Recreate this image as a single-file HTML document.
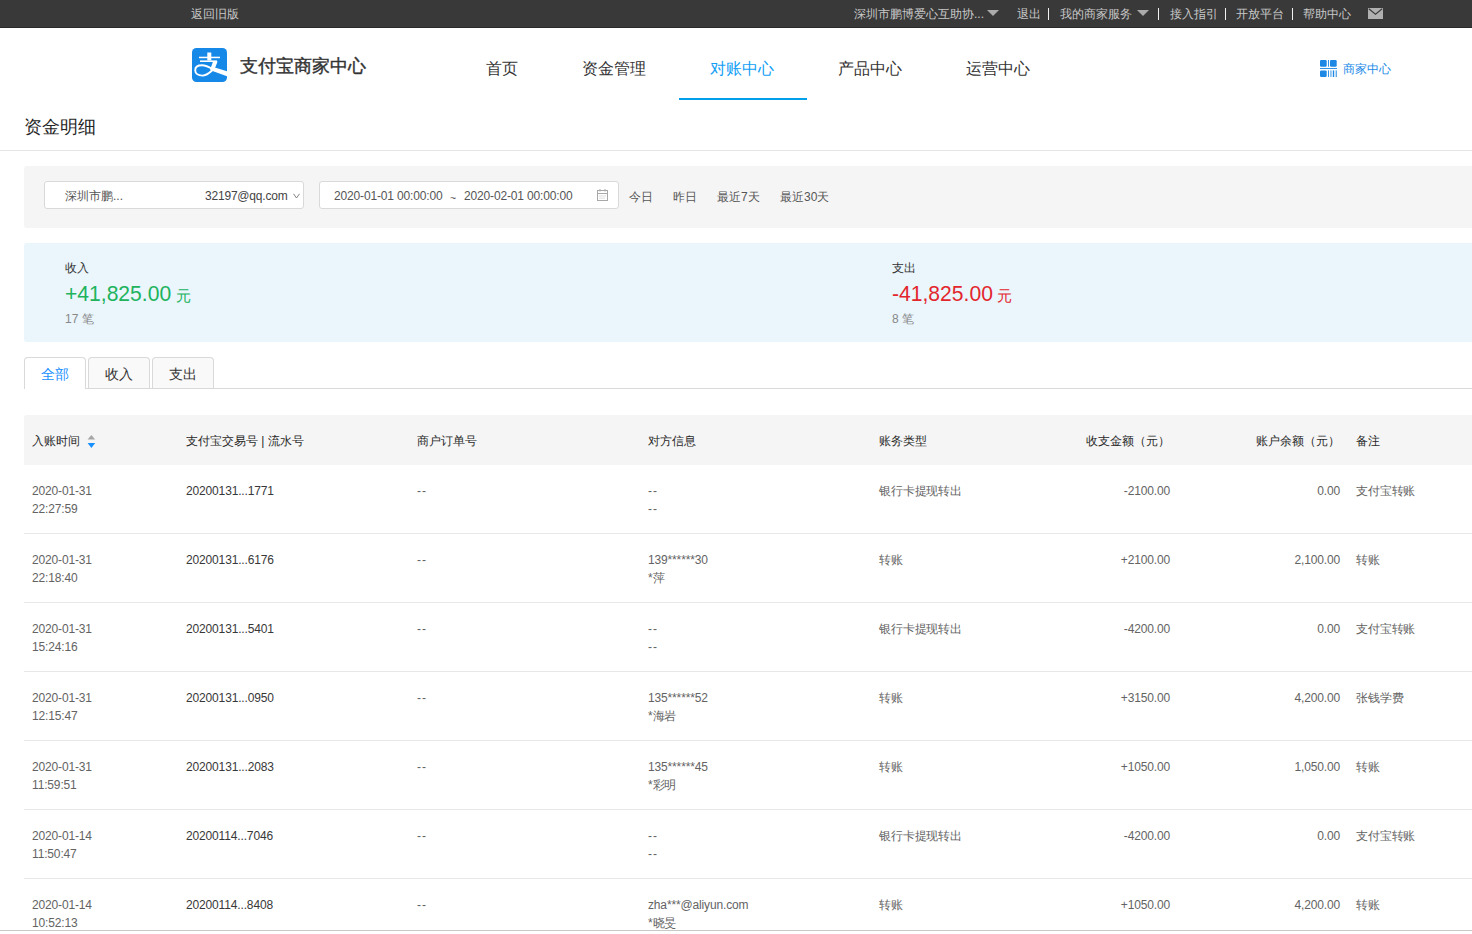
<!DOCTYPE html>
<html><head><meta charset="utf-8">
<style>
*{margin:0;padding:0;box-sizing:border-box}
html,body{width:1472px;height:934px;overflow:hidden;background:#fff;font-family:"Liberation Sans",sans-serif;color:#333}
.a{position:absolute;white-space:nowrap}
#top{position:absolute;left:0;top:0;width:1472px;height:28px;background:#393939;border-bottom:1px solid #2a2a2a}
#top .t{position:absolute;top:6px;font-size:12px;line-height:16px;color:#c8c8c8}
.sep{position:absolute;top:8px;width:1px;height:12px;background:#f0f0f0}
.tri{position:absolute;top:10px;width:0;height:0;border-left:6px solid transparent;border-right:6px solid transparent;border-top:6.5px solid #ababab}
.nav{position:absolute;top:58px;font-size:16px;line-height:22px;color:#333}
#logo{position:absolute;left:192px;top:48px;width:35px;height:34px}
.hr{position:absolute;left:0;width:1472px;height:1px;background:#e5e5e5}
#filter{position:absolute;left:24px;top:166px;width:1460px;height:62px;background:#f5f5f5;border-radius:3px}
.box{position:absolute;top:181px;height:28px;background:#fff;border:1px solid #d9d9d9;border-radius:3px}
.ft{position:absolute;top:188px;font-size:12px;line-height:16px;color:#555}
.q{position:absolute;top:189px;font-size:12px;line-height:16px;color:#555}
#sum{position:absolute;left:24px;top:243px;width:1460px;height:99px;background:#eaf5fc;border-radius:3px}
.sl{position:absolute;top:260px;font-size:12px;line-height:16px;color:#333}
.sv{position:absolute;top:281px;font-size:22.5px;line-height:26px;transform:scaleX(0.9375);transform-origin:0 0;white-space:nowrap}
.yu{position:absolute;top:287px;font-size:14.5px;line-height:18px;white-space:nowrap}
.sc{position:absolute;top:311px;font-size:12px;line-height:16px;color:#888}
.tab{position:absolute;top:357px;height:32px;border:1px solid #d9d9d9;border-bottom:none;border-radius:4px 4px 0 0;background:#f9f9f9;font-size:14px;line-height:33px;text-align:center;color:#333}
#thead{position:absolute;left:24px;top:415px;width:1460px;height:50px;background:#f5f5f5;border-radius:3px 3px 0 0}
.th{position:absolute;top:433px;font-size:12px;line-height:16px;color:#2a2a2a}
.td{position:absolute;font-size:12px;line-height:18px;color:#636363;white-space:nowrap;letter-spacing:-0.15px}
.dd{letter-spacing:0.9px}
.c1{left:32px}.c2{left:186px;color:#383838}.c3{left:417px}.c4{left:648px}.c5{left:879px}
.c6{right:302px}.c7{right:132px}.c8{left:1356px}
.row{position:absolute;left:24px;width:1448px;height:1px;background:#e8e8e8}

</style></head><body>
<div id="top">
  <div class="t" style="left:191px">返回旧版</div>
  <div class="t" style="left:854px">深圳市鹏博爱心互助协...</div>
  <div class="tri" style="left:987px"></div>
  <div class="t" style="left:1017px">退出</div>
  <div class="sep" style="left:1048px"></div>
  <div class="t" style="left:1060px">我的商家服务</div>
  <div class="tri" style="left:1137px"></div>
  <div class="sep" style="left:1158px"></div>
  <div class="t" style="left:1170px">接入指引</div>
  <div class="sep" style="left:1225px"></div>
  <div class="t" style="left:1236px">开放平台</div>
  <div class="sep" style="left:1292px"></div>
  <div class="t" style="left:1303px">帮助中心</div>
  <svg class="a" style="left:1368px;top:8px" width="15" height="11" viewBox="0 0 15 11"><rect x="0" y="0" width="15" height="11" fill="#b0b0b0"/><path d="M0.8 0.8 L7.5 6.2 L14.2 0.8" stroke="#3a3a3a" stroke-width="1.1" fill="none"/></svg>
</div>
<svg id="logo" viewBox="0 0 35 34">
  <defs><clipPath id="lc"><rect x="0" y="0" width="35" height="34" rx="4.5"/></clipPath></defs>
  <g clip-path="url(#lc)">
  <rect x="0" y="0" width="35" height="34" fill="#1688e8"/>
  <rect x="7" y="8.7" width="21" height="1.5" fill="#fff"/>
  <rect x="15.3" y="4.5" width="4" height="8" fill="#fff"/>
  <rect x="8" y="12.4" width="17" height="1.6" fill="#fff"/>
  <path d="M21 13.6 L25.6 13.6 L22.4 21.5 L18.2 21.8 Z" fill="#fff"/>
  <path d="M19.5 18.6 L36 23.5 L36 28.7 L18.4 22.3 Z" fill="#fff"/>
  <path d="M20.3 21.2 C17 19 14 17.3 10 17.3 C5.5 17.3 3.2 19.4 3.2 22.3 C3.2 25.3 6 27.6 10.3 27.6 C14.5 27.6 17.5 25 20.3 22.3" stroke="#fff" stroke-width="1.9" fill="none"/>
  </g>
</svg>
<div class="a" style="left:240px;top:55px;font-size:17.5px;line-height:22px;color:#333;font-weight:500;-webkit-text-stroke:0.4px #333">支付宝商家中心</div>
<div class="nav" style="left:486px">首页</div>
<div class="nav" style="left:582px">资金管理</div>
<div class="nav" style="left:710px;color:#12a0f5">对账中心</div>
<div class="nav" style="left:838px">产品中心</div>
<div class="nav" style="left:966px">运营中心</div>
<div class="a" style="left:679px;top:98px;width:128px;height:2px;background:#00a0ea"></div>
<svg class="a" style="left:1320px;top:60px" width="17" height="17" viewBox="0 0 17 17" fill="#1e88e5">
  <rect x="0" y="0" width="6.7" height="6.7" rx="1.2"/><rect x="8.1" y="0" width="0.9" height="6.7"/><rect x="10" y="0" width="6.7" height="6.7" rx="1.2"/>
  <rect x="0" y="8.1" width="17" height="0.9"/>
  <rect x="0" y="10.4" width="6.7" height="6.6" rx="1.2"/><rect x="8.1" y="10.4" width="0.9" height="6.6"/><rect x="10.5" y="10.4" width="0.9" height="6.6"/><rect x="12.8" y="10.4" width="1.4" height="6.6"/><rect x="15.7" y="10.4" width="1" height="6.6"/>
</svg>
<div class="a" style="left:1343px;top:61px;font-size:12px;line-height:17px;color:#1a8ae8">商家中心</div>

<div class="a" style="left:24px;top:116px;font-size:18px;line-height:22px;color:#262626">资金明细</div>
<div class="hr" style="top:150px"></div>

<div id="filter"></div>
<div class="box" style="left:44px;width:260px"></div>
<div class="ft" style="left:65px">深圳市鹏...</div>
<div class="ft" style="left:205px;color:#444;letter-spacing:-0.2px">32197@qq.com</div>
<svg class="a" style="left:292.5px;top:193px" width="7" height="6" viewBox="0 0 7 6"><path d="M0.5 0.8 L3.5 5 L6.5 0.8" stroke="#777" stroke-width="0.9" fill="none"/></svg>
<div class="box" style="left:319px;width:300px"></div>
<div class="ft" style="left:334px;letter-spacing:-0.15px">2020-01-01 00:00:00</div>
<div class="ft" style="left:450px;top:190px;font-size:10.5px">~</div>
<div class="ft" style="left:464px;letter-spacing:-0.15px">2020-02-01 00:00:00</div>
<svg class="a" style="left:597px;top:189px" width="11" height="12" viewBox="0 0 11 12"><rect x="0.5" y="1.5" width="10" height="10" fill="none" stroke="#a8a8a8" stroke-width="1"/><rect x="0.5" y="4" width="10" height="1" fill="#a8a8a8"/><rect x="2.5" y="0" width="1" height="2.5" fill="#a8a8a8"/><rect x="7.5" y="0" width="1" height="2.5" fill="#a8a8a8"/><path d="M2.5 7H3.5M4.5 7H5.5M6.5 7H7.5M8.5 7H9 M2.5 9.2H3.5M4.5 9.2H5.5M6.5 9.2H7.5" stroke="#b8b8b8" stroke-width="0.9"/></svg>
<div class="q" style="left:629px">今日</div>
<div class="q" style="left:673px">昨日</div>
<div class="q" style="left:717px">最近7天</div>
<div class="q" style="left:780px">最近30天</div>

<div id="sum"></div>
<div class="sl" style="left:65px">收入</div>
<div class="sv" style="left:65px;color:#20b35c">+41,825.00</div><div class="yu" style="left:176px;color:#20b35c">元</div>
<div class="sc" style="left:65px">17 笔</div>
<div class="sl" style="left:892px">支出</div>
<div class="sv" style="left:892px;color:#e3262c">-41,825.00</div><div class="yu" style="left:997px;color:#e3262c">元</div>
<div class="sc" style="left:892px">8 笔</div>

<div class="tab" style="left:24px;width:62px;background:#fff;color:#1890ff;height:32px">全部</div>
<div class="tab" style="left:88px;width:62px">收入</div>
<div class="tab" style="left:152px;width:62px">支出</div>
<div class="a" style="left:86px;top:388px;width:1386px;height:1px;background:#d9d9d9"></div>

<div id="thead"></div>
<div class="th" style="left:32px">入账时间</div>
<svg class="a" style="left:87px;top:434px" width="9" height="15" viewBox="0 0 9 15"><path d="M0.6 5.4 L4.4 1 L8.2 5.4 Z" fill="#a6a6a6"/><path d="M0.6 9 L4.4 14 L8.2 9 Z" fill="#1890ff"/></svg>
<div class="th" style="left:186px">支付宝交易号 | 流水号</div>
<div class="th" style="left:417px">商户订单号</div>
<div class="th" style="left:648px">对方信息</div>
<div class="th" style="left:879px">账务类型</div>
<div class="th" style="right:302px">收支金额（元）</div>
<div class="th" style="right:132px">账户余额（元）</div>
<div class="th" style="left:1356px">备注</div>
<div class="hr" style="top:930px;background:#c8c8c8"></div>

<div class="td c1" style="top:482px">2020-01-31</div>
<div class="td c1" style="top:500px">22:27:59</div>
<div class="td c2" style="top:482px">20200131...1771</div>
<div class="td c3 dd" style="top:482px">--</div>
<div class="td c4 dd" style="top:482px">--</div>
<div class="td c4 dd" style="top:500px">--</div>
<div class="td c5" style="top:482px">银行卡提现转出</div>
<div class="td c6" style="top:482px">-2100.00</div>
<div class="td c7" style="top:482px">0.00</div>
<div class="td c8" style="top:482px">支付宝转账</div>
<div class="row" style="top:533px"></div>
<div class="td c1" style="top:551px">2020-01-31</div>
<div class="td c1" style="top:569px">22:18:40</div>
<div class="td c2" style="top:551px">20200131...6176</div>
<div class="td c3 dd" style="top:551px">--</div>
<div class="td c4" style="top:551px">139******30</div>
<div class="td c4" style="top:569px">*萍</div>
<div class="td c5" style="top:551px">转账</div>
<div class="td c6" style="top:551px">+2100.00</div>
<div class="td c7" style="top:551px">2,100.00</div>
<div class="td c8" style="top:551px">转账</div>
<div class="row" style="top:602px"></div>
<div class="td c1" style="top:620px">2020-01-31</div>
<div class="td c1" style="top:638px">15:24:16</div>
<div class="td c2" style="top:620px">20200131...5401</div>
<div class="td c3 dd" style="top:620px">--</div>
<div class="td c4 dd" style="top:620px">--</div>
<div class="td c4 dd" style="top:638px">--</div>
<div class="td c5" style="top:620px">银行卡提现转出</div>
<div class="td c6" style="top:620px">-4200.00</div>
<div class="td c7" style="top:620px">0.00</div>
<div class="td c8" style="top:620px">支付宝转账</div>
<div class="row" style="top:671px"></div>
<div class="td c1" style="top:689px">2020-01-31</div>
<div class="td c1" style="top:707px">12:15:47</div>
<div class="td c2" style="top:689px">20200131...0950</div>
<div class="td c3 dd" style="top:689px">--</div>
<div class="td c4" style="top:689px">135******52</div>
<div class="td c4" style="top:707px">*海岩</div>
<div class="td c5" style="top:689px">转账</div>
<div class="td c6" style="top:689px">+3150.00</div>
<div class="td c7" style="top:689px">4,200.00</div>
<div class="td c8" style="top:689px">张钱学费</div>
<div class="row" style="top:740px"></div>
<div class="td c1" style="top:758px">2020-01-31</div>
<div class="td c1" style="top:776px">11:59:51</div>
<div class="td c2" style="top:758px">20200131...2083</div>
<div class="td c3 dd" style="top:758px">--</div>
<div class="td c4" style="top:758px">135******45</div>
<div class="td c4" style="top:776px">*彩明</div>
<div class="td c5" style="top:758px">转账</div>
<div class="td c6" style="top:758px">+1050.00</div>
<div class="td c7" style="top:758px">1,050.00</div>
<div class="td c8" style="top:758px">转账</div>
<div class="row" style="top:809px"></div>
<div class="td c1" style="top:827px">2020-01-14</div>
<div class="td c1" style="top:845px">11:50:47</div>
<div class="td c2" style="top:827px">20200114...7046</div>
<div class="td c3 dd" style="top:827px">--</div>
<div class="td c4 dd" style="top:827px">--</div>
<div class="td c4 dd" style="top:845px">--</div>
<div class="td c5" style="top:827px">银行卡提现转出</div>
<div class="td c6" style="top:827px">-4200.00</div>
<div class="td c7" style="top:827px">0.00</div>
<div class="td c8" style="top:827px">支付宝转账</div>
<div class="row" style="top:878px"></div>
<div class="td c1" style="top:896px">2020-01-14</div>
<div class="td c1" style="top:914px">10:52:13</div>
<div class="td c2" style="top:896px">20200114...8408</div>
<div class="td c3 dd" style="top:896px">--</div>
<div class="td c4" style="top:896px">zha***@aliyun.com</div>
<div class="td c4" style="top:914px">*晓旻</div>
<div class="td c5" style="top:896px">转账</div>
<div class="td c6" style="top:896px">+1050.00</div>
<div class="td c7" style="top:896px">4,200.00</div>
<div class="td c8" style="top:896px">转账</div>
<div class="row" style="top:947px"></div>
</body></html>
